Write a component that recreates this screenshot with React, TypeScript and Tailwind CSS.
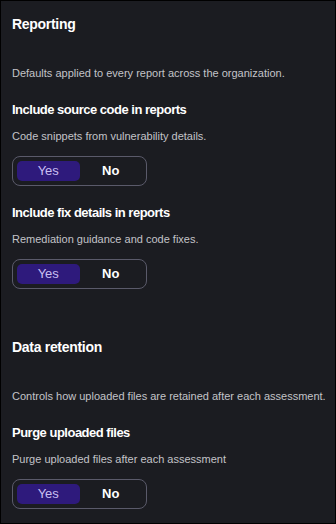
import React from 'react';

function YesNo() {
  return (
    <div className="grid w-[135px] grid-cols-2 rounded-lg border border-[#5a5a6a] p-[4px]">
      <button className="h-[20px] rounded-[5px] bg-[#2e1a7c] text-[13px] text-[#c9bff2]">Yes</button>
      <button className="h-[20px] text-[13px] font-semibold text-white">No</button>
    </div>
  );
}

function Setting({ title, desc, mt }: { title: string; desc: string; mt: string }) {
  return (
    <div className={mt}>
      <div className="text-[13px] font-bold leading-[18px] tracking-[-0.5px] text-white">{title}</div>
      <div className="mt-[9px] whitespace-nowrap text-[11px] leading-[16px] text-[#c3c3c8]">{desc}</div>
      <div className="mt-[12px]">
        <YesNo />
      </div>
    </div>
  );
}

export default function App() {
  return (
    <div
      className="h-[524px] w-[336px] overflow-hidden border border-black bg-[#1b1c21] px-[11px] pt-[13px]"
      style={{ fontFamily: '"Liberation Sans", Arial, sans-serif' }}
    >
      <h2 className="text-[14px] font-bold leading-[20px] tracking-[-0.3px] text-white">Reporting</h2>
      <p className="mt-[31px] whitespace-nowrap text-[11px] leading-[16px] text-[#c3c3c8]">
        Defaults applied to every report across the organization.
      </p>
      <Setting mt="mt-[20px]" title="Include source code in reports" desc="Code snippets from vulnerability details." />
      <Setting mt="mt-[18px]" title="Include fix details in reports" desc="Remediation guidance and code fixes." />

      <h2 className="mt-[48px] text-[14px] font-bold leading-[20px] tracking-[-0.3px] text-white">Data retention</h2>
      <p className="mt-[31px] whitespace-nowrap text-[11px] leading-[16px] text-[#c3c3c8]">
        Controls how uploaded files are retained after each assessment.
      </p>
      <Setting mt="mt-[20px]" title="Purge uploaded files" desc="Purge uploaded files after each assessment" />
    </div>
  );
}
